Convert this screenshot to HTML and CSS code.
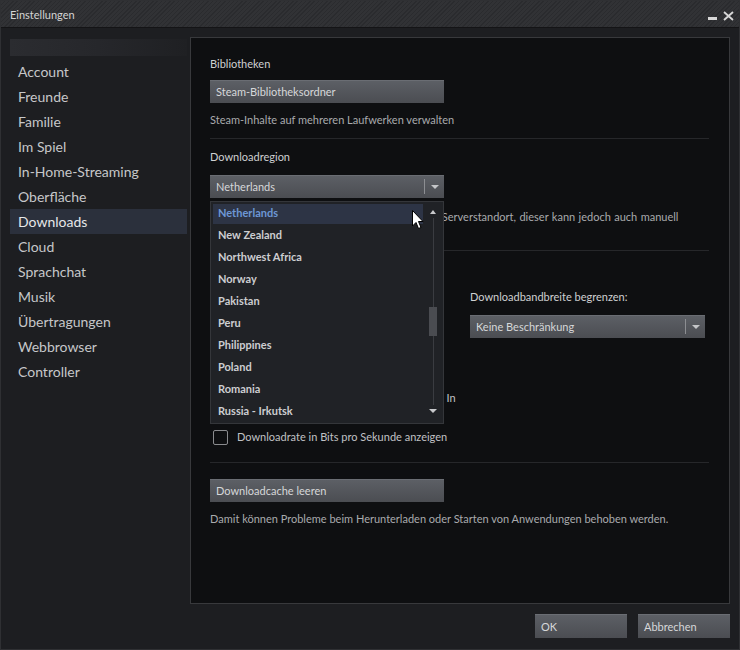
FILE: index.html
```html
<!DOCTYPE html>
<html lang="de">
<head>
    <meta charset="UTF-8"/>
    <title>Einstellungen</title>
    <link rel="stylesheet" href="styles.css">
</head>
<body>
<div class="window">
    <div class="titlebar">
        <span class="title">Einstellungen</span>
        <div class="win-btns">
            <svg width="9" height="4" viewBox="0 0 9 4"><rect x="0" y="0" width="9" height="3" fill="#d8d8d8"/></svg>
            <svg width="11" height="10" viewBox="0 0 11 10"><path d="M1 1 L10 9 M10 1 L1 9" stroke="#d8d8d8" stroke-width="1.8"/></svg>
        </div>
    </div>

    <div class="main">
        <!-- linke Navigation -->
        <div class="sidebar">
            <div class="account-blur"></div>
            <ul class="nav">
                <li>Account</li>
                <li>Freunde</li>
                <li>Familie</li>
                <li>Im Spiel</li>
                <li>In-Home-Streaming</li>
                <li>Oberfläche</li>
                <li class="active">Downloads</li>
                <li>Cloud</li>
                <li>Sprachchat</li>
                <li>Musik</li>
                <li>Übertragungen</li>
                <li>Webbrowser</li>
                <li>Controller</li>
            </ul>
        </div>

        <!-- Inhalt -->
        <div class="panel">
            <div class="label">Bibliotheken</div>
            <button type="button" class="btn wide">Steam-Bibliotheksordner</button>
            <p class="hint">Steam-Inhalte auf mehreren Laufwerken verwalten</p>
            <div class="divider"></div>

            <div class="label">Downloadregion</div>
            <div class="select-wrap">
                <div class="select wide">Netherlands<span class="sel-arrow"></span></div>
                <div class="dropdown">
                    <ul class="options">
                        <li class="hover">Netherlands</li>
                        <li>New Zealand</li>
                        <li>Northwest Africa</li>
                        <li>Norway</li>
                        <li>Pakistan</li>
                        <li>Peru</li>
                        <li>Philippines</li>
                        <li>Poland</li>
                        <li>Romania</li>
                        <li>Russia - Irkutsk</li>
                    </ul>
                    <div class="scrollbar">
                        <span class="sb-up"></span>
                        <span class="sb-track"><span class="sb-thumb"></span></span>
                        <span class="sb-down"></span>
                    </div>
                    <svg class="cursor" width="12" height="20" viewBox="0 0 12 20">
                        <path d="M0.5 0.5 L0.5 16 L4 12.5 L6.5 18.5 L9 17.5 L6.5 11.5 L11 11.5 Z" fill="#fff" stroke="#000" stroke-width="1"/>
                    </svg>
                </div>
            </div>
            <p class="hint region-hint">Steam wählt automatisch den nächstgelegenen Serverstandort, dieser kann jedoch auch manuell</p>
            <div class="divider tight"></div>

            <div class="limits">
                <div class="col">
                    <div class="check throttle"><span class="box"></span>Downloads drosseln, während Spiele durch In</div>
                </div>
                <div class="col">
                    <div class="label">Downloadbandbreite begrenzen:</div>
                    <div class="select">Keine Beschränkung<span class="sel-arrow"></span></div>
                </div>
            </div>
            <div class="check bits"><span class="box"></span>Downloadrate in Bits pro Sekunde anzeigen</div>
            <div class="divider cache"></div>

            <button type="button" class="btn wide">Downloadcache leeren</button>
            <p class="hint">Damit können Probleme beim Herunterladen oder Starten von Anwendungen behoben werden.</p>
        </div>
    </div>

    <div class="footer">
        <button type="button" class="btn foot">OK</button>
        <button type="button" class="btn foot">Abbrechen</button>
    </div>
</div>
</body>
</html>
```

FILE: styles.css
```css
/* Grundlayout */
body {
    margin: 0;
    background-color: #1d1e21;
    font-family: Lato, "Liberation Sans", sans-serif;
}

.window {
    width: 740px;
    height: 650px;
    box-sizing: border-box;
    border: 1px solid #2f3033;
    background-color: #1d1e21;
    display: flex;
    flex-direction: column;
}

/* Titelleiste mit Streifen */
.titlebar {
    height: 26px;
    flex-shrink: 0;
    display: flex;
    align-items: center;
    justify-content: space-between;
    padding: 0 5px 0 9px;
    border-bottom: 1px solid #141416;
    background: repeating-linear-gradient(-45deg, #2a2b2e 0, #2a2b2e 1px, #313235 1px, #313235 3px);
}

.title {
    font-size: 11px;
    color: #d4d4d4;
}

.win-btns {
    display: flex;
    align-items: flex-end;
    gap: 6px;
    padding-top: 3px;
}

.main {
    display: flex;
    gap: 3px;
    padding: 0 9px 0 9px;
}

/* Navigation links */
.sidebar {
    width: 177px;
    padding-top: 11px;
}

.account-blur {
    height: 17px;
    margin-bottom: 3px;
    background: linear-gradient(90deg, #2b2c30 0%, #26272b 50%, #1f2023 100%);
}

.nav {
    list-style: none;
    margin: 0;
    padding: 0;
}

.nav li {
    height: 25px;
    line-height: 25px;
    padding-left: 8px;
    font-size: 14px;
    color: #c6c7c9;
}

.nav li.active {
    background-color: #2b303c;
    color: #e6e7e9;
}

/* Inhaltsbereich */
.panel {
    width: 540px;
    height: 567px;
    box-sizing: border-box;
    margin-top: 9px;
    padding: 18px 20px 0 19px;
    border: 1px solid #38393c;
    background-color: #0e0f11;
    color: #c9c9cb;
    font-size: 11px;
}

.label {
    line-height: 16px;
    color: #cfd0d2;
}

.hint {
    margin: 9px 0 0 0;
    line-height: 16px;
    color: #a9aaad;
}

.divider {
    height: 1px;
    margin-top: 10px;
    margin-bottom: 10px;
    background-color: #26272a;
}

.divider.tight {
    margin-top: 25px;
    margin-bottom: 0;
}

.divider.cache {
    margin-top: 17px;
    margin-bottom: 16px;
}

.btn {
    display: block;
    height: 23px;
    padding: 0 6px;
    border: none;
    text-align: left;
    font-family: inherit;
    font-size: 11px;
    color: #d6d7d9;
    background: linear-gradient(#5d6066, #4b4d52);
    box-shadow: inset 0 1px 0 #6a6d73;
}

.btn.wide {
    width: 234px;
    margin-top: 8px;
}

/* Auswahlfelder */
.select-wrap {
    position: relative;
    margin-top: 10px;
}

.select {
    position: relative;
    height: 23px;
    line-height: 23px;
    padding-left: 6px;
    box-sizing: border-box;
    color: #d6d7d9;
    background: linear-gradient(#5d6066, #4b4d52);
    box-shadow: inset 0 1px 0 #6a6d73;
}

.select.wide {
    width: 234px;
}

.sel-arrow {
    position: absolute;
    right: 0;
    top: 4px;
    width: 19px;
    height: 15px;
    border-left: 1px solid #8c8e92;
}

.sel-arrow::after {
    content: "";
    position: absolute;
    left: 6px;
    top: 6px;
    border-left: 4px solid transparent;
    border-right: 4px solid transparent;
    border-top: 4px solid #c4c5c8;
}

.region-hint {
    margin-top: 11px;
    width: 500px;
    word-spacing: 0.6px;
}

/* Aufgeklappte Liste */
.dropdown {
    position: absolute;
    top: 26px;
    left: 0;
    z-index: 5;
    width: 234px;
    height: 223px;
    box-sizing: border-box;
    display: flex;
    padding: 0 0 0 2px;
    border: 1px solid #34363a;
    background-color: #202226;
}

.options {
    list-style: none;
    margin: 0;
    padding: 0;
    width: 210px;
}

.options li {
    height: 22px;
    line-height: 22px;
    padding-left: 5px;
    font-size: 11px;
    font-weight: bold;
    color: #cdced1;
}

.options li.hover {
    background-color: #2d3445;
    color: #6d97d4;
    box-shadow: inset 0 2px 0 #202226;
}

.scrollbar {
    position: relative;
    width: 20px;
    display: flex;
    flex-direction: column;
    align-items: center;
    padding-top: 8px;
}

.sb-up {
    border-left: 3px solid transparent;
    border-right: 3px solid transparent;
    border-bottom: 4px solid #c8c9cc;
}

.sb-track {
    position: relative;
    width: 1px;
    height: 187px;
    margin: 4px 0;
    background-color: #3a3c41;
}

.sb-thumb {
    position: absolute;
    left: -4px;
    top: 89px;
    width: 8px;
    height: 29px;
    background-color: #4a4c51;
}

.sb-down {
    border-left: 4px solid transparent;
    border-right: 4px solid transparent;
    border-top: 4px solid #c8c9cc;
}

.cursor {
    position: absolute;
    left: 201px;
    top: 8px;
}

/* Bandbreite */
.limits {
    display: grid;
    grid-template-columns: 255px 235px;
    column-gap: 5px;
}

.limits .label {
    margin-top: 38px;
}

.limits .select {
    margin-top: 10px;
}

.check {
    display: flex;
    align-items: flex-start;
    gap: 9px;
    line-height: 16px;
    color: #c0c1c4;
}

.check .box {
    flex-shrink: 0;
    width: 13px;
    height: 13px;
    margin: 1px 0 0 3px;
    border: 1px solid #8a8b8e;
    border-radius: 2px;
}

.check.throttle {
    margin-top: 139px;
    white-space: nowrap;
}

.check.bits {
    margin-top: 23px;
}

/* Fußleiste */
.footer {
    display: flex;
    justify-content: flex-end;
    gap: 11px;
    padding: 10px 9px 0 0;
}

.btn.foot {
    width: 92px;
    height: 24px;
}
```
